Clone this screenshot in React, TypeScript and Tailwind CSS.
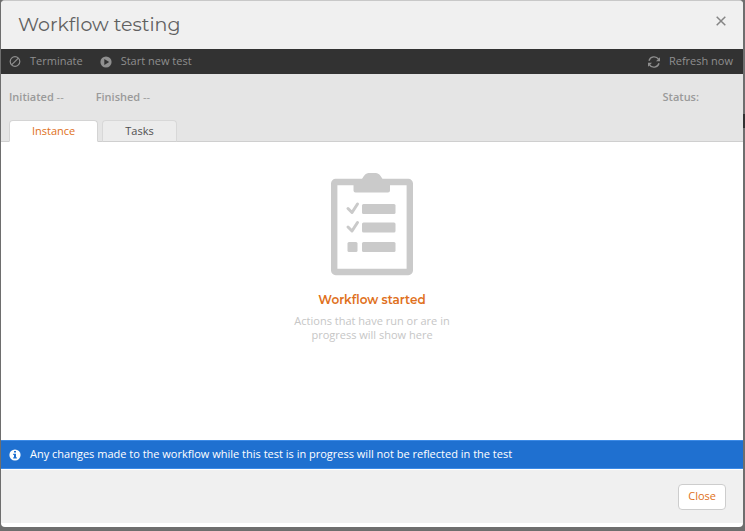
import React, { useState } from 'react';

const TABS = ['Instance', 'Tasks'];

const BanIcon = () => (
  <svg className="w-3 h-3 shrink-0" viewBox="0 0 12 12" fill="none" stroke="currentColor" strokeWidth="1.2" aria-hidden="true">
    <circle cx="6" cy="5.5" r="4.8" />
    <path d="M2.600 8.900 9.400 2.100" />
  </svg>
);

const PlayIcon = () => (
  <svg className="w-3 h-3 shrink-0" viewBox="0 0 12 12" fill="currentColor" aria-hidden="true">
    <path fillRule="evenodd" d="M6 .4a5.6 5.6 0 1 0 0 11.2A5.6 5.6 0 0 0 6 .4ZM4.3 3v6l4.9-3-4.9-3Z" />
  </svg>
);

const RefreshIcon = () => (
  <svg className="w-3.5 h-3.5 shrink-0" viewBox="0 0 14 14" aria-hidden="true">
    <g fill="none" stroke="currentColor" strokeWidth="1.400">
      <path d="M2 5.700A5.300 5.300 0 0 1 11.500 4.200" />
      <path d="M12 8.300A5.300 5.300 0 0 1 2.500 9.800" />
    </g>
    <path fill="currentColor" d="M13 2.200v4H9ZM1 11.800v-4h4Z" />
  </svg>
);

const InfoIcon = () => (
  <svg className="w-3 h-3 shrink-0" viewBox="0 0 12 12" aria-hidden="true">
    <circle cx="6" cy="6" r="5.6" fill="#fff" />
    <path fill="#1f70d0" d="M5 1.900h2v1.700H5ZM4.200 4.700H7v3.600h.8v1.200H4.200V8.300H5V5.900h-.8Z" />
  </svg>
);

const ClipboardIcon = () => (
  <svg className="w-[82px] h-[103px]" viewBox="0 0 82 103" fill="#cacaca" aria-hidden="true">
    <rect x="3.200" y="9" width="75.600" height="90" rx="1.500" fill="none" stroke="#cacaca" strokeWidth="6.400" />
    <path d="M22.500 6h8.500Q34 0 37.500 0h7.500Q48.500 0 51.500 6H59v11.500q0 2-2 2H24.500q-2 0-2-2Z" />
    <rect x="31" y="31" width="33.500" height="10" rx="1.500" />
    <rect x="31" y="49.500" width="33.500" height="10" rx="1.500" />
    <rect x="31" y="69" width="33.500" height="10" rx="1.500" />
    <rect x="16.500" y="69" width="10" height="10" rx="1.500" />
    <g fill="none" stroke="#cacaca" strokeWidth="3" strokeLinecap="round" strokeLinejoin="round">
      <path d="M17 35.500l4 4L26.500 31" />
      <path d="M17 54l4 4L26.500 49.500" />
    </g>
  </svg>
);

const App: React.FC = () => {
  const [activeTab, setActiveTab] = useState('Instance');

  return (
    <div className="relative min-h-screen flex flex-col bg-[#6e6e6e] pl-px pr-0.5 pb-1 font-['Open_Sans',sans-serif] text-[11px]">
      {/* Page scrollbar behind the dialog */}
      <div className="absolute right-0 top-[114px] w-0.5 h-3.5 bg-[#323232]" />

      <div role="dialog" aria-labelledby="dialog-title" className="flex-1 flex flex-col bg-white border-t border-[#c8c8c8] rounded-sm overflow-hidden pb-1">
        <header className="h-12 flex items-center justify-between bg-[#f0f0f0] px-[17px]">
          <h1 id="dialog-title" className="text-[19px] font-normal text-[#606060] font-['Montserrat',Inter,sans-serif]">
            Workflow testing
          </h1>
          <button type="button" aria-label="Close dialog" className="text-[#858585] mb-2">
            <svg className="w-2.5 h-2.5" viewBox="0 0 10 10" fill="none" stroke="currentColor" strokeWidth="1.500" aria-hidden="true">
              <path d="M.7.7l8.600 8.600M9.300.7.7 9.300" />
            </svg>
          </button>
        </header>

        <div className="h-[25px] flex items-center bg-[#323232] text-[#8f8f8f] pl-2 pr-2.5">
          <button type="button" className="flex items-center gap-[9px]">
            <BanIcon />
            Terminate
          </button>
          <button type="button" className="flex items-center gap-[9px] ml-[17px]">
            <PlayIcon />
            Start new test
          </button>
          <button type="button" className="flex items-center gap-2 ml-auto">
            <RefreshIcon />
            Refresh now
          </button>
        </div>

        <section className="bg-[#e5e5e5] border-b border-[#cfcfcf] px-2 pt-[15px]">
          <div className="flex gap-8 h-4 items-center text-[#9a9a9a]">
            <p><span className="font-semibold">Initiated</span> --</p>
            <p><span className="font-semibold">Finished</span> --</p>
            <p className="ml-auto mr-9 font-semibold">Status:</p>
          </div>
          <div role="tablist" className="flex gap-1 mt-[15px] -mb-px">
            {TABS.map(tab => (
              <button
                key={tab}
                type="button"
                role="tab"
                aria-selected={activeTab === tab}
                onClick={() => setActiveTab(tab)}
                className={`h-[22px] px-[22px] border rounded-t-sm ${activeTab === tab ? 'bg-white border-[#d4d4d4] border-b-white text-[#e07020]' : 'bg-[#ececec] border-[#d8d8d8] border-b-[#cfcfcf] text-[#505050]'}`}
              >
                {tab}
              </button>
            ))}
          </div>
        </section>

        <main className="flex-1 flex flex-col items-center pt-[31px] pb-8 text-center">
          <ClipboardIcon />
          <h2 className="mt-4 text-xs leading-4 font-semibold text-[#e07020] font-['Montserrat',Inter,sans-serif]">
            Workflow started
          </h2>
          <p className="mt-1.5 max-w-[160px] leading-[14px] text-[#c6c6c6]">
            Actions that have run or are in progress will show here
          </p>
        </main>

        <div role="status" className="h-[29px] flex items-center gap-[9px] bg-[#1f70d0] border-y border-[#3c8ae6] pl-2 text-white">
          <InfoIcon />
          Any changes made to the workflow while this test is in progress will not be reflected in the test
        </div>

        <footer className="h-[54px] flex items-center justify-end bg-[#f0f0f0] border-t border-white pr-[17px]">
          <button type="button" className="h-[26px] px-[9px] bg-white border border-[#cdcdcd] rounded-sm text-[#e07020]">
            Close
          </button>
        </footer>
      </div>
    </div>
  );
};

export default App;
